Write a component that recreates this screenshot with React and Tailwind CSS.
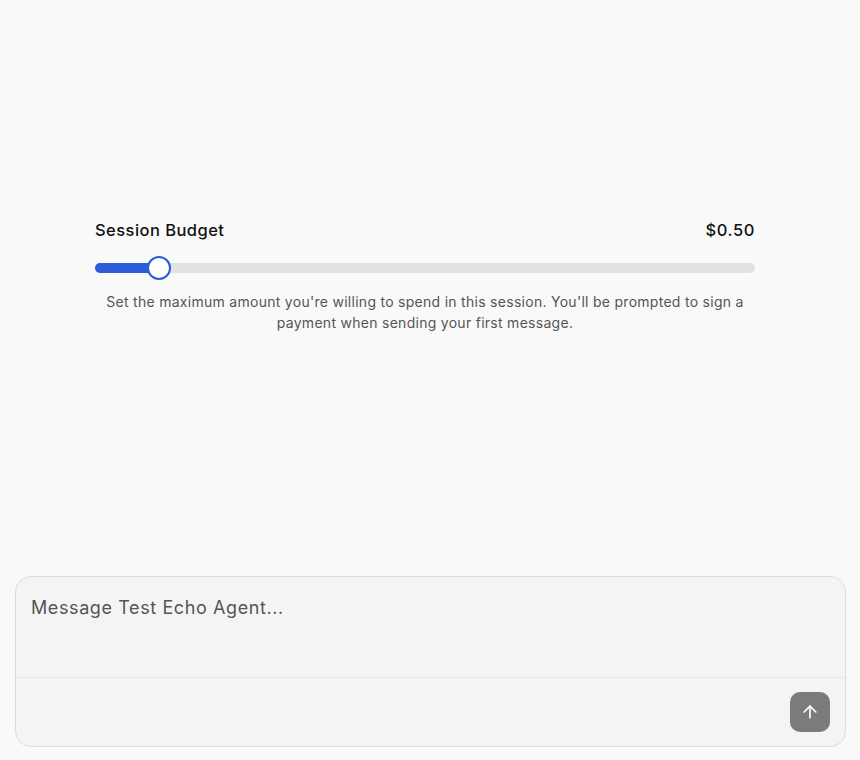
import React from "react";

export default function App() {
  return (
    <div className="h-[760px] w-full bg-[#f9f9f9] flex flex-col overflow-hidden" style={{ fontFamily: "Inter, 'Noto Sans', sans-serif" }}>
      <div className="flex-1 pt-[219px]">
        <div className="w-[660px] ml-[95px]">
          <div className="flex items-center justify-between h-[22px]">
            <span className="text-[16.5px] font-medium text-[#111] tracking-[0.45px]">Session Budget</span>
            <span className="text-[16.5px] font-medium text-[#111] tracking-[0.6px]">$0.50</span>
          </div>
          <div className="relative mt-[22px] h-[10px] rounded-full bg-[#e2e2e2]">
            <div className="h-full w-[64px] rounded-full bg-[#2b5bd8]" />
            <div className="absolute left-[52px] top-[-7px] h-[24px] w-[24px] rounded-full bg-white border-2 border-[#2b5bd8]" />
          </div>
          <p className="mt-[18px] text-center text-[14px] leading-[21px] text-[#555] tracking-[0.28px]">
            Set the maximum amount you're willing to spend in this session. You'll be prompted to sign a payment when sending your first message.
          </p>
        </div>
      </div>
      <div className="ml-[15px] mr-[14px] mb-[13px] h-[171px] rounded-[16px] border border-[#dcdcdc] bg-[#f4f4f4] flex flex-col">
        <div className="h-[101px] border-b border-[#e6e6e6] px-[15px] pt-[17px]">
          <span className="text-[18px] text-[#555] tracking-[0.6px]">Message Test Echo Agent...</span>
        </div>
        <div className="flex-1 flex items-start justify-end pt-[14px] pr-[15px]">
          <button className="h-[40px] w-[40px] rounded-[10px] bg-[#7b7b7b] flex items-center justify-center">
            <svg width="20" height="20" viewBox="0 0 24 24" fill="none" stroke="white" strokeWidth="2" strokeLinecap="round" strokeLinejoin="round">
              <path d="M12 19V5" />
              <path d="M5 12l7-7 7 7" />
            </svg>
          </button>
        </div>
      </div>
    </div>
  );
}
